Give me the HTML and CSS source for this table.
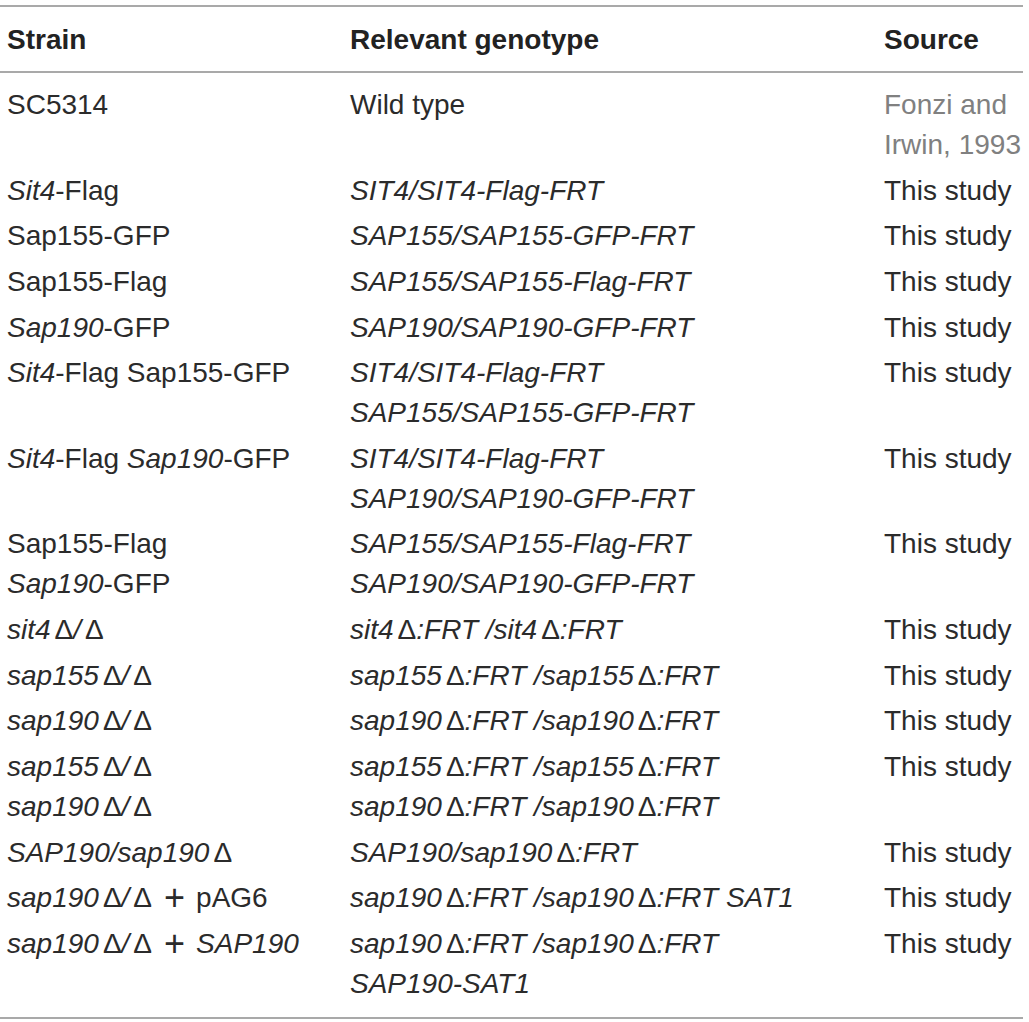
FILE: index.html
```html
<!DOCTYPE html>
<html>
<head>
<meta charset="utf-8">
<link rel="stylesheet" href="styles.css">
</head>
<body>
<table class="strains">
  <colgroup>
    <col class="c1"><col class="c2"><col class="c3">
  </colgroup>
  <thead>
    <tr><th>Strain</th><th>Relevant genotype</th><th>Source</th></tr>
  </thead>
  <tbody>
    <tr><td>SC5314</td><td>Wild type</td><td class="ref">Fonzi and<br>Irwin, 1993</td></tr>
    <tr><td><i>Sit4</i>-Flag</td><td><i>SIT4/SIT4-Flag-FRT</i></td><td>This study</td></tr>
    <tr><td>Sap155-GFP</td><td><i>SAP155/SAP155-GFP-FRT</i></td><td>This study</td></tr>
    <tr><td>Sap155-Flag</td><td><i>SAP155/SAP155-Flag-FRT</i></td><td>This study</td></tr>
    <tr><td><i>Sap190</i>-GFP</td><td><i>SAP190/SAP190-GFP-FRT</i></td><td>This study</td></tr>
    <tr><td><i>Sit4</i>-Flag Sap155-GFP</td><td><i>SIT4/SIT4-Flag-FRT<br>SAP155/SAP155-GFP-FRT</i></td><td>This study</td></tr>
    <tr><td><i>Sit4</i>-Flag <i>Sap190</i>-GFP</td><td><i>SIT4/SIT4-Flag-FRT<br>SAP190/SAP190-GFP-FRT</i></td><td>This study</td></tr>
    <tr><td>Sap155-Flag<br><i>Sap190</i>-GFP</td><td><i>SAP155/SAP155-Flag-FRT<br>SAP190/SAP190-GFP-FRT</i></td><td>This study</td></tr>
    <tr><td><i>sit4<span class="d">Δ</span>/<span class="d">Δ</span></i></td><td><i>sit4<span class="d">Δ</span>:FRT /sit4<span class="d">Δ</span>:FRT</i></td><td>This study</td></tr>
    <tr><td><i>sap155<span class="d">Δ</span>/<span class="d">Δ</span></i></td><td><i>sap155<span class="d">Δ</span>:FRT /sap155<span class="d">Δ</span>:FRT</i></td><td>This study</td></tr>
    <tr><td><i>sap190<span class="d">Δ</span>/<span class="d">Δ</span></i></td><td><i>sap190<span class="d">Δ</span>:FRT /sap190<span class="d">Δ</span>:FRT</i></td><td>This study</td></tr>
    <tr><td><i>sap155<span class="d">Δ</span>/<span class="d">Δ</span><br>sap190<span class="d">Δ</span>/<span class="d">Δ</span></i></td><td><i>sap155<span class="d">Δ</span>:FRT /sap155<span class="d">Δ</span>:FRT<br>sap190<span class="d">Δ</span>:FRT /sap190<span class="d">Δ</span>:FRT</i></td><td>This study</td></tr>
    <tr><td><i>SAP190/sap190<span class="d">Δ</span></i></td><td><i>SAP190/sap190<span class="d">Δ</span>:FRT</i></td><td>This study</td></tr>
    <tr><td><i>sap190<span class="d">Δ</span>/<span class="d">Δ</span></i><span class="plus">+</span>pAG6</td><td><i>sap190<span class="d">Δ</span>:FRT /sap190<span class="d">Δ</span>:FRT SAT1</i></td><td>This study</td></tr>
    <tr><td><i>sap190<span class="d">Δ</span>/<span class="d">Δ</span></i><span class="plus">+</span><i>SAP190</i></td><td><i>sap190<span class="d">Δ</span>:FRT /sap190<span class="d">Δ</span>:FRT<br>SAP190-SAT1</i></td><td>This study</td></tr>
  </tbody>
</table>
</body>
</html>
```
FILE: styles.css
```css
html, body {
  margin: 0;
  padding: 0;
  background: #ffffff;
}
body {
  padding-top: 5px;
}
.strains {
  width: 1023px;
  border-collapse: collapse;
  table-layout: fixed;
  font-family: "Liberation Sans", Arial, sans-serif;
  font-size: 28px;
  line-height: 40px;
  color: #2b2b2b;
}
.c1 { width: 343px; }
.c2 { width: 534px; }
.c3 { width: 146px; }
.strains thead tr {
  border-top: 2px solid #a9a9a9;
  border-bottom: 2px solid #a9a9a9;
}
.strains tbody {
  border-bottom: 2px solid #a9a9a9;
}
.strains th {
  text-align: left;
  font-weight: bold;
  color: #222222;
  padding: 13px 0 11px 7px;
  vertical-align: top;
}
.strains td {
  text-align: left;
  vertical-align: top;
  white-space: nowrap;
  padding: 3px 0 2.65px 7px;
}
.strains tbody tr:first-child td {
  padding-top: 12px;
}
.strains tbody tr:last-child td {
  padding-bottom: 13px;
}
.strains td.ref {
  color: #808080;
}
.d {
  font-style: normal;
  margin: 0 0 0 4px;
}
.plus {
  display: inline-block;
  font-size: 36px;
  line-height: 0;
  vertical-align: -3px;
  margin: 0 11px 0 12px;
}
```
